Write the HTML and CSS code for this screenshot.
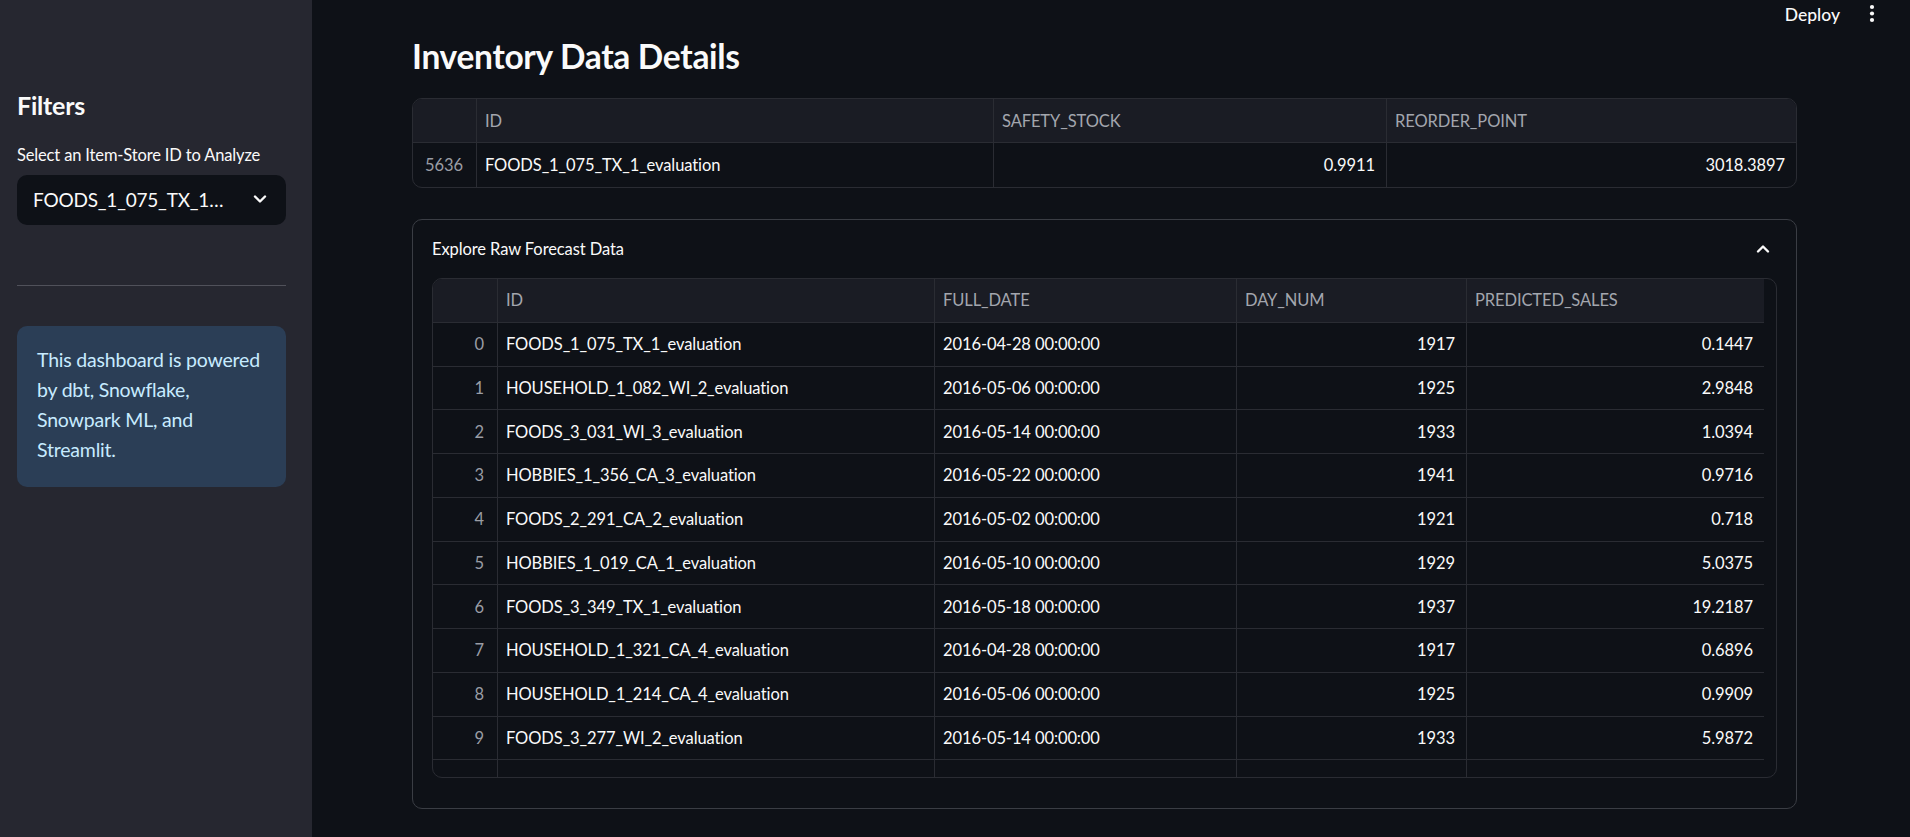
FILE: index.html
```html
<!DOCTYPE html>
<html lang="en">
<head>
<meta charset="utf-8">
<title>Inventory Data Details</title>
<link rel="stylesheet" href="styles.css">
</head>
<body>
<div class="app">
  <aside class="sidebar">
    <h2 class="sb-title">Filters</h2>
    <div class="sb-label">Select an Item-Store ID to Analyze</div>
    <div class="select">
      <span class="select-value">FOODS_1_075_TX_1…</span>
      <svg class="select-chev" width="14" height="10" viewBox="0 0 14 10"><path d="M2 2.5 L7 7.5 L12 2.5" fill="none" stroke="#fafafa" stroke-width="2.4" stroke-linecap="round" stroke-linejoin="round"/></svg>
    </div>
    <hr class="sb-divider">
    <div class="info">This dashboard is powered<br>by dbt, Snowflake,<br>Snowpark ML, and<br>Streamlit.</div>
  </aside>

  <main class="main">
    <div class="toolbar">
      <span class="deploy">Deploy</span>
      <svg class="kebab" width="8" height="20" viewBox="0 0 8 20"><circle cx="4" cy="3" r="2.1" fill="#fafafa"/><circle cx="4" cy="9.5" r="2.1" fill="#fafafa"/><circle cx="4" cy="16" r="2.1" fill="#fafafa"/></svg>
    </div>

    <h1 class="title">Inventory Data Details</h1>

    <div class="grid grid-summary">
      <div class="cell head"></div>
      <div class="cell head">ID</div>
      <div class="cell head">SAFETY_STOCK</div>
      <div class="cell head last">REORDER_POINT</div>
      <div class="cell idx bottom">5636</div>
      <div class="cell bottom">FOODS_1_075_TX_1_evaluation</div>
      <div class="cell num bottom">0.9911</div>
      <div class="cell num bottom last">3018.3897</div>
    </div>

    <div class="expander">
      <div class="exp-head">
        <span class="exp-title">Explore Raw Forecast Data</span>
        <svg class="exp-chev" width="14" height="10" viewBox="0 0 14 10"><path d="M2 7.5 L7 2.5 L12 7.5" fill="none" stroke="#fafafa" stroke-width="2.4" stroke-linecap="round" stroke-linejoin="round"/></svg>
      </div>
      <div class="exp-body">
        <div class="frame">
          <div class="grid grid-forecast">
            <div class="cell head"></div>
            <div class="cell head">ID</div>
            <div class="cell head">FULL_DATE</div>
            <div class="cell head">DAY_NUM</div>
            <div class="cell head last">PREDICTED_SALES</div>

            <div class="cell idx">0</div><div class="cell">FOODS_1_075_TX_1_evaluation</div><div class="cell">2016-04-28 00:00:00</div><div class="cell num">1917</div><div class="cell num last">0.1447</div>
            <div class="cell idx">1</div><div class="cell">HOUSEHOLD_1_082_WI_2_evaluation</div><div class="cell">2016-05-06 00:00:00</div><div class="cell num">1925</div><div class="cell num last">2.9848</div>
            <div class="cell idx">2</div><div class="cell">FOODS_3_031_WI_3_evaluation</div><div class="cell">2016-05-14 00:00:00</div><div class="cell num">1933</div><div class="cell num last">1.0394</div>
            <div class="cell idx">3</div><div class="cell">HOBBIES_1_356_CA_3_evaluation</div><div class="cell">2016-05-22 00:00:00</div><div class="cell num">1941</div><div class="cell num last">0.9716</div>
            <div class="cell idx">4</div><div class="cell">FOODS_2_291_CA_2_evaluation</div><div class="cell">2016-05-02 00:00:00</div><div class="cell num">1921</div><div class="cell num last">0.718</div>
            <div class="cell idx">5</div><div class="cell">HOBBIES_1_019_CA_1_evaluation</div><div class="cell">2016-05-10 00:00:00</div><div class="cell num">1929</div><div class="cell num last">5.0375</div>
            <div class="cell idx">6</div><div class="cell">FOODS_3_349_TX_1_evaluation</div><div class="cell">2016-05-18 00:00:00</div><div class="cell num">1937</div><div class="cell num last">19.2187</div>
            <div class="cell idx">7</div><div class="cell">HOUSEHOLD_1_321_CA_4_evaluation</div><div class="cell">2016-04-28 00:00:00</div><div class="cell num">1917</div><div class="cell num last">0.6896</div>
            <div class="cell idx">8</div><div class="cell">HOUSEHOLD_1_214_CA_4_evaluation</div><div class="cell">2016-05-06 00:00:00</div><div class="cell num">1925</div><div class="cell num last">0.9909</div>
            <div class="cell idx">9</div><div class="cell">FOODS_3_277_WI_2_evaluation</div><div class="cell">2016-05-14 00:00:00</div><div class="cell num">1933</div><div class="cell num last">5.9872</div>
            <div class="cell idx"></div><div class="cell"></div><div class="cell"></div><div class="cell num"></div><div class="cell num last"></div>
          </div>
        </div>
      </div>
    </div>
  </main>
</div>
</body>
</html>
```

FILE: styles.css
```css
* { box-sizing: border-box; }

html, body {
  margin: 0;
  padding: 0;
  height: 100%;
  background: #0e1117;
  color: #fafafa;
  font-family: Lato, "Noto Sans", "Liberation Sans", sans-serif;
  overflow: hidden;
}

.app {
  display: flex;
  width: 1910px;
  height: 837px;
}

/* ---------- Sidebar ---------- */
.sidebar {
  width: 312px;
  flex: 0 0 312px;
  background: #262730;
  padding: 90px 26px 0 17px;
  display: flex;
  flex-direction: column;
}

.sb-title {
  margin: 0;
  font-size: 25px;
  line-height: 30px;
  font-weight: 700;
  letter-spacing: -0.2px;
  color: #fafafa;
}

.sb-label {
  margin-top: 25px;
  font-size: 16.5px;
  line-height: 20px;
  color: #fafafa;
  letter-spacing: -0.15px;
}

.select {
  margin-top: 10px;
  height: 50px;
  background: #0e1117;
  border-radius: 10px;
  display: flex;
  align-items: center;
  justify-content: space-between;
  padding: 0 19px 2px 16px;
}

.select-value {
  font-size: 19px;
  color: #fafafa;
  white-space: nowrap;
  letter-spacing: -0.2px;
}

.select-chev { display: block; }

.sb-divider {
  margin: 60px 0 0 0;
  border: 0;
  height: 1px;
  background: #50515a;
}

.info {
  margin-top: 40px;
  background: #2b3e56;
  border-radius: 10px;
  padding: 19px 20px 22px 20px;
  color: #c7ebff;
  font-size: 19.5px;
  line-height: 30px;
  letter-spacing: -0.2px;
}

/* ---------- Main ---------- */
.main {
  flex: 1;
  position: relative;
  padding: 37px 113px 0 100px;
}

.toolbar {
  position: absolute;
  top: 0;
  right: 0;
  height: 28px;
  display: flex;
  align-items: center;
  padding-right: 34px;
  gap: 28px;
}

.deploy {
  font-size: 17.5px;
  font-weight: 500;
  color: #fafafa;
}

.kebab { display: block; }

.title {
  margin: 0;
  font-size: 33.5px;
  line-height: 38px;
  font-weight: 700;
  letter-spacing: -0.3px;
  color: #fafafa;
}

/* ---------- Data grids ---------- */
.grid {
  display: grid;
  font-size: 16.5px;
}

.cell {
  height: 43.75px;
  display: flex;
  align-items: center;
  padding: 0 10px 0 8px;
  border-right: 1px solid #2a2c33;
  border-bottom: 1px solid #2a2c33;
  white-space: nowrap;
  overflow: hidden;
  color: #fafafa;
  letter-spacing: -0.1px;
}

.grid-summary .cell { height: 44px; }

.cell.head {
  background: #1a1c24;
  color: #a3a6ae;
}

.cell.idx {
  justify-content: flex-end;
  color: #9a9da5;
  padding-right: 13px;
}

.cell.num { justify-content: flex-end; padding-right: 11px; }

.cell.last { border-right: 0; }
.cell.bottom { border-bottom: 0; }

.grid-summary {
  margin-top: 23px;
  grid-template-columns: 64px 517px 393px 1fr;
  border: 1px solid #2a2c33;
  border-radius: 10px;
  overflow: hidden;
}

/* ---------- Expander ---------- */
.expander {
  margin-top: 31px;
  border: 1px solid #3a3d44;
  border-radius: 10px;
}

.exp-head {
  height: 58px;
  display: flex;
  align-items: center;
  justify-content: space-between;
  padding: 0 26px 0 19px;
}

.exp-title {
  font-size: 16.5px;
  color: #fafafa;
  letter-spacing: -0.1px;
}

.exp-chev { display: block; }

.exp-body {
  padding: 0 19px 30px 19px;
}

.frame {
  height: 500px;
  border: 1px solid #2a2c33;
  border-radius: 10px;
  overflow: hidden;
}

.grid-forecast {
  width: 1331px;
  grid-template-columns: 65px 437px 302px 230px 297px;
}
```
